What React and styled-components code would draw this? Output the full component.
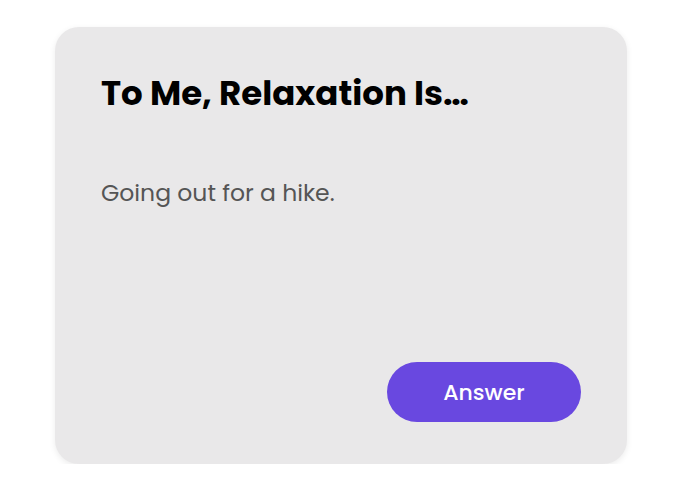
import React from 'react';
import styled, { createGlobalStyle } from 'styled-components';

const GlobalStyle = createGlobalStyle`
  html, body {
    margin: 0;
    padding: 0;
    background: #ffffff;
    font-family: Poppins, Inter, "Noto Sans", sans-serif;
  }
`;

// Page wrapper that centers the card
const Page = styled.div`
  display: flex;
  justify-content: center;
  padding: 27px 0 0 2px;
`;

// The prompt card
const Card = styled.div`
  box-sizing: border-box;
  width: 572px;
  height: 437px;
  padding: 42px 46px 42px 46px;
  background: #e9e8e9;
  border-radius: 24px;
  box-shadow: 0 2px 6px rgba(0, 0, 0, 0.08);
  display: flex;
  flex-direction: column;
`;

const Title = styled.h1`
  margin: 0;
  font-size: 34px;
  font-weight: 700;
  color: #000000;
  line-height: 48px;
`;

const Answer = styled.p`
  margin: 59px 0 0 0;
  font-size: 23.5px;
  font-weight: 400;
  color: #555555;
  line-height: 34px;
`;

const Footer = styled.div`
  margin-top: auto;
  display: flex;
  justify-content: flex-end;
`;

const Button = styled.button`
  width: 194px;
  height: 60px;
  border: none;
  border-radius: 30px;
  background: #6948e0;
  color: #ffffff;
  font-family: inherit;
  font-size: 22px;
  font-weight: 500;
  cursor: pointer;
`;

const App = () => {
  return (
    <>
      <GlobalStyle />
      <Page>
        <Card>
          <Title>To Me, Relaxation Is…</Title>
          <Answer>Going out for a hike.</Answer>
          <Footer>
            <Button>Answer</Button>
          </Footer>
        </Card>
      </Page>
    </>
  );
};

export default App;
